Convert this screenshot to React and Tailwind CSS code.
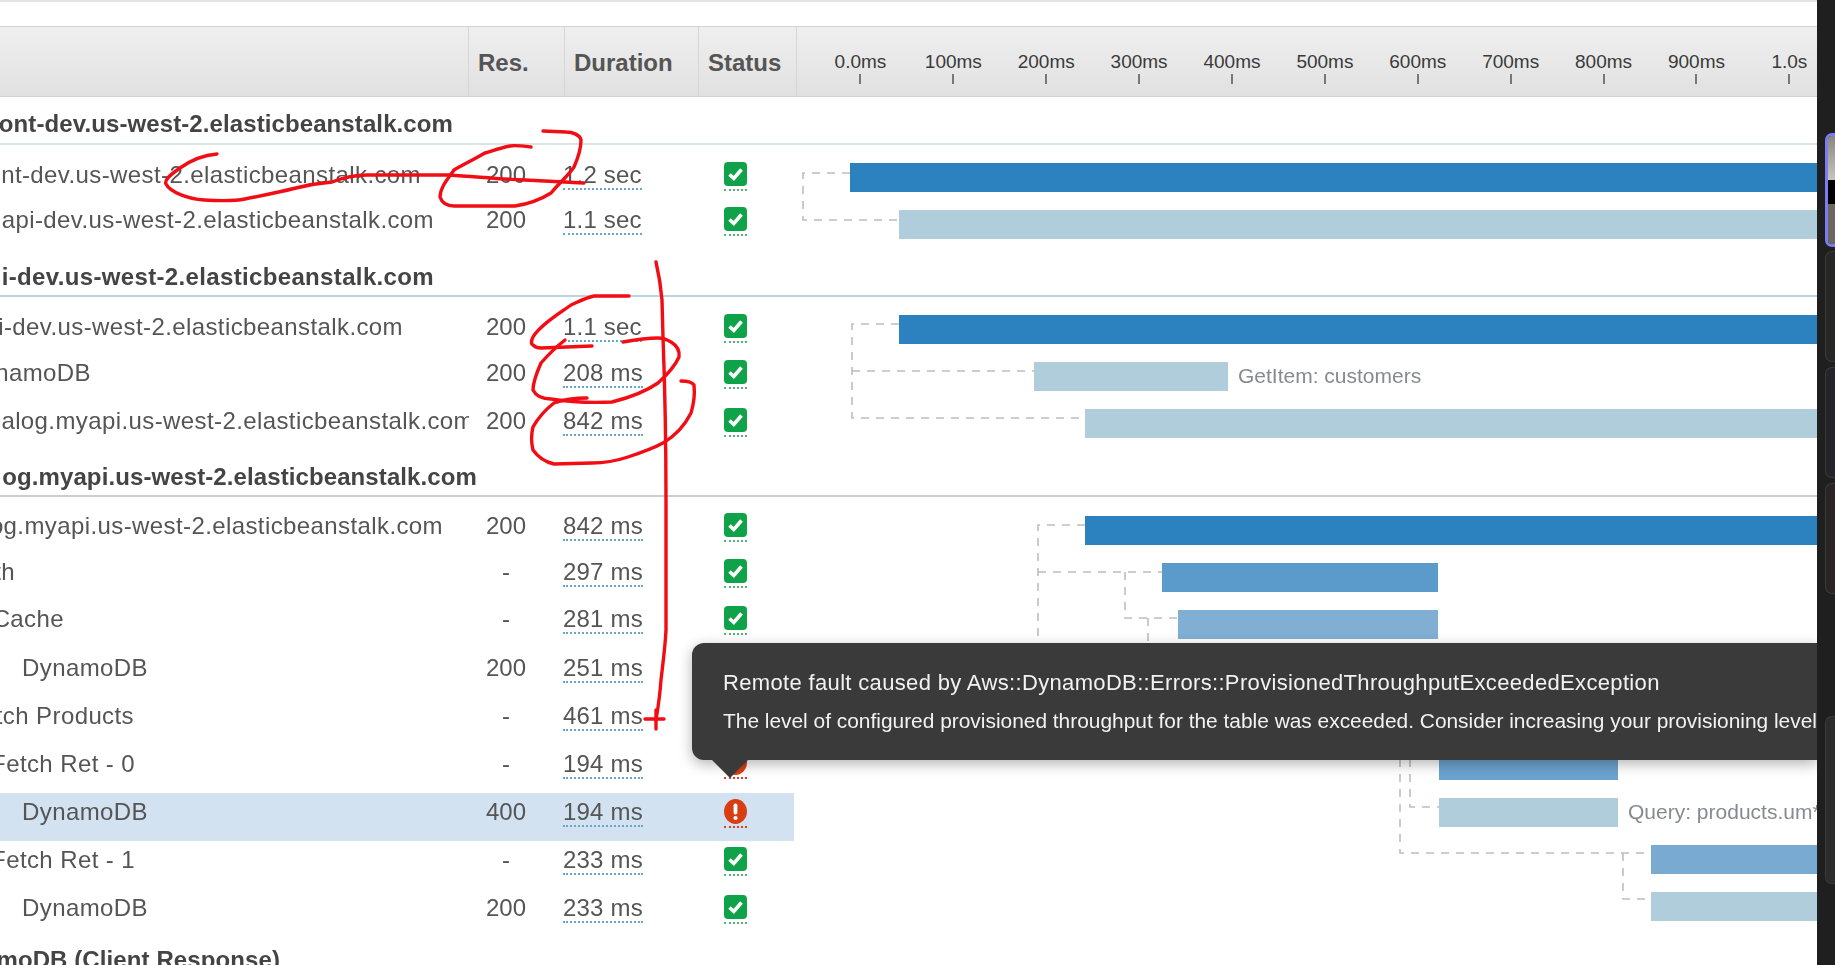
const ticks = ["0.0ms","100ms","200ms","300ms","400ms","500ms","600ms","700ms","800ms","900ms","1.0s"];

const DARK = "bg-[#2b82bf]";
const LIGHT = "bg-[#b0cddb]";

function StatusIcon({ kind }) {
  if (kind === "none") return null;
  if (kind === "error") {
    return (
      <span className="mt-[2px] flex w-[23px] flex-col items-center border-b-2 border-dotted border-[#d9421c] pb-[2px]">
        <svg width="23" height="25" viewBox="0 0 23 25">
          <ellipse cx="11.5" cy="12.5" rx="11.5" ry="12.5" fill="#d93d12" />
          <rect x="9.6" y="4.5" width="3.8" height="11" rx="1.7" fill="#fff" />
          <circle cx="11.5" cy="19" r="2.1" fill="#fff" />
        </svg>
      </span>
    );
  }
  return (
    <span className="mt-[2px] flex w-[23px] flex-col items-center border-b-2 border-dotted border-[#58b07c] pb-[3px]">
      <svg width="23" height="24" viewBox="0 0 23 24">
        <rect width="23" height="24" rx="4" fill="#10a249" />
        <path d="M5.5 12.5 L9.8 16.5 L17.5 7.5" fill="none" stroke="#fff" strokeWidth="3.6" />
      </svg>
    </span>
  );
}

function Row({ height, nameBox, name, res, dur, status = "ok", extra = "" }) {
  return (
    <div className={`flex w-[794px] items-center ${height} ${extra}`}>
      <div className="flex w-[469px] shrink-0 justify-start overflow-hidden">
        <div className={`flex shrink-0 justify-end whitespace-nowrap tracking-[0.4px] text-[#555] ${nameBox}`}>{name}</div>
      </div>
      <div className="w-[95px] shrink-0 pr-[21px] text-center text-[#555]">{res}</div>
      <div className="w-[135px] shrink-0">
        <span className="-ml-[1px] inline-block whitespace-nowrap border-b-2 border-dotted border-[#6aa6cc] leading-[27px] tracking-[0.2px] text-[#555]">{dur}</span>
      </div>
      <div className="flex w-[95px] shrink-0 pl-[25px]"><StatusIcon kind={status} /></div>
    </div>
  );
}

function Bar({ offset, width, color, label }) {
  return (
    <div className="flex h-[29px] items-center overflow-hidden">
      <div className={`h-[29px] shrink-0 ${offset} ${width} ${color}`} />
      {label && <span className="mb-[2px] ml-[10px] whitespace-nowrap text-[21px] text-[#858b90]">{label}</span>}
    </div>
  );
}

function Heading({ children, box, extra }) {
  return (
    <div className={`flex h-[48px] items-center overflow-hidden font-bold text-[#444] ${extra}`}>
      <div className={`flex shrink-0 justify-end whitespace-nowrap ${box}`}>{children}</div>
    </div>
  );
}

function Connectors() {
  const paths = [
    "M850 173 H803 V220 H899",
    "M899 324 H852 V418 H1085 M852 371 H1034",
    "M1085 525 H1038 V643 M1038 572 H1162 M1125 572 V618 H1178 M1148 618 V643",
    "M1400 759 V853 H1651 M1623 853 V899 H1651 M1410 759 V807 H1439",
  ];
  return (
    <svg className="absolute left-0 top-0" width="1817" height="965">
      {paths.map((d) => (
        <path key={d} d={d} fill="none" stroke="#bdbdbd" strokeWidth="1.6" strokeDasharray="8 7" />
      ))}
    </svg>
  );
}

function Scribbles() {
  const strokes = [
    "M217 154 C205 155 194 158 180 168 C170 175 164 180 166 184 C170 192 188 199 204 200 C222 201 235 201 245 199 C265 195 280 192 296 188 C312 184 320 183 332 182 C345 177 355 175 367 175 L449 175 C480 177 500 179 525 180 L584 183",
    "M531 147 C522 146 515 145 510 146 C500 148 495 150 485 153 C473 160 462 165 454 170 C447 180 440 188 440 197 C442 203 447 206 454 206 L515 206 C528 204 540 200 551 193 C560 182 568 176 574 167 C578 158 581 150 581 140 C580 135 573 132 566 132 L543 131",
    "M656 262 C659 275 661 288 662 300 L663 337 C665 390 666 450 666 500 L666 630 C665 650 662 670 661 680 C660 695 658 708 656 720",
    "M645 719 H664 M656 710 V729",
    "M629 296 L594 296 C585 298 578 302 571 305 C560 313 540 325 533 337 C531 341 531 344 533 345 C536 348 538 348 541 348 L592 346",
    "M565 340 C556 347 548 355 541 363 C537 372 533 381 533 390 C536 396 543 399 551 399 C570 402 592 403 612 402 C628 398 645 392 658 383 C668 374 675 366 679 357 C680 350 676 345 671 342 C666 339 662 338 658 338 C646 338 634 340 623 342",
    "M681 381 C687 381 692 382 694 385 C695 394 694 403 691 413 C685 425 675 436 663 443 C652 449 640 453 628 457 C616 461 604 463 592 463 L554 464 C545 462 538 457 533 450 C531 442 531 435 533 427 C538 418 545 410 554 403 C565 399 576 398 587 398",
  ];
  return (
    <svg className="pointer-events-none absolute left-0 top-0 z-20" width="1817" height="965">
      {strokes.map((d) => (
        <path key={d} d={d} fill="none" stroke="#f20d14" strokeWidth="3.4" strokeLinecap="round" />
      ))}
    </svg>
  );
}

function Tooltip() {
  return (
    <div className="absolute left-[692px] right-0 top-[643px] z-10 h-[117px] rounded-l-[12px] bg-[#3a3a3a] pl-[31px] pt-[27px] text-[#f2f2f2] shadow-[0_4px_14px_rgba(0,0,0,0.3)]">
      <div className="whitespace-nowrap text-[22px] leading-[26px] tracking-[0.34px]">Remote fault caused by Aws::DynamoDB::Errors::ProvisionedThroughputExceededException</div>
      <div className="mt-[12px] overflow-hidden whitespace-nowrap text-[20.9px] leading-[26px]">The level of configured provisioned throughput for the table was exceeded. Consider increasing your provisioning level</div>
      <div className="absolute left-[20px] top-[117px] h-0 w-0 border-x-[18px] border-t-[18px] border-x-transparent border-t-[#3a3a3a]" />
    </div>
  );
}

function Sidebar() {
  return (
    <div className="flex w-[18px] shrink-0 flex-col bg-[#1f1f1f] pl-[8px]">
      <div className="mt-[133px] flex h-[114px] flex-col overflow-hidden rounded-l-[7px] border-y-[3px] border-l-[3px] border-[#7b7bf2]">
        <div className="h-[44px] bg-gradient-to-b from-[#8a8782] to-[#c9c5bd]" />
        <div className="h-[24px] bg-black" />
        <div className="flex-1 bg-[#6c685f]" />
      </div>
      <div className="mt-[4px] h-[111px] rounded-l-[7px] border-y border-l border-[#3a3a3a] bg-[#272725]" />
      <div className="mt-[5px] h-[111px] rounded-l-[7px] border-y border-l border-[#3a3a3a] bg-[#24242a]" />
      <div className="mt-[5px] h-[111px] rounded-l-[7px] border-y border-l border-[#3a3a3a] bg-[#2b2424]" />
      <div className="mt-[122px] h-[168px] rounded-l-[7px] border-y border-l border-[#3f3a38] bg-[#2c2c2c]" />
    </div>
  );
}

export default function App() {
  return (
    <div className="flex h-[965px] w-[1835px] overflow-hidden bg-white font-['Liberation_Sans',Arial,sans-serif] text-[24px]">
      <div className="relative w-[1817px] shrink-0 overflow-hidden blur-[0.5px]">
        <Connectors />
        <div className="h-[2px] bg-[#e4e4e4]" />
        <div className="mt-[24px] flex h-[71px] items-center border-y border-[#d2d2d2] bg-gradient-to-b from-[#efefef] to-[#e1e1e1]">
          <div className="h-full w-[469px] shrink-0 border-r border-[#d6d6d6]" />
          <div className="flex h-full w-[96px] shrink-0 items-center border-r border-[#d6d6d6] pl-[9px] pt-[3px] font-bold text-[#555]">Res.</div>
          <div className="flex h-full w-[134px] shrink-0 items-center border-r border-[#d6d6d6] pl-[9px] pt-[3px] font-bold text-[#555]">Duration</div>
          <div className="flex h-full w-[98px] shrink-0 items-center border-r border-[#d6d6d6] pl-[9px] pt-[3px] font-bold text-[#555]">Status</div>
          <div className="mt-[11px] flex flex-1 pl-[17px]">
            {ticks.map((t) => (
              <div key={t} className="flex w-[92.9px] shrink-0 flex-col items-center">
                <span className="whitespace-nowrap text-[19px] leading-[24px] text-[#3a3a3a]">{t}</span>
                <span className="h-[10px] w-[2px] bg-[#777]" />
              </div>
            ))}
          </div>
        </div>

        <Heading box="w-[453px] tracking-[0.1px]" extra="border-b-2 border-[#d9e4e4] pt-[8px]">ont-dev.us-west-2.elasticbeanstalk.com</Heading>
        <div className="flex h-[104px]">
          <div className="w-[797px] shrink-0 pt-[8px]">
            <Row height="h-[44px]" nameBox="w-[421px]" name="nt-dev.us-west-2.elasticbeanstalk.com" res="200" dur="1.2 sec" />
            <Row height="h-[46px]" nameBox="w-[434px]" name="api-dev.us-west-2.elasticbeanstalk.com" res="200" dur="1.1 sec" />
          </div>
        </div>

        <Heading box="w-[434px] tracking-[0.35px]" extra="border-b-2 border-[#bcd5e2] pt-[9px]">i-dev.us-west-2.elasticbeanstalk.com</Heading>
        <div className="flex h-[152px]">
          <div className="w-[797px] shrink-0 pt-[7px]">
            <Row height="h-[46px]" nameBox="w-[403px]" name="i-dev.us-west-2.elasticbeanstalk.com" res="200" dur="1.1 sec" />
            <Row height="h-[46px]" nameBox="w-[91px]" name="namoDB" res="200" dur="208 ms" />
            <Row height="h-[50px]" nameBox="w-[474px]" name="alog.myapi.us-west-2.elasticbeanstalk.com" res="200" dur="842 ms" />
          </div>
        </div>

        <Heading box="w-[477px] tracking-[0.1px]" extra="border-b-2 border-[#cdcdcd] pt-[10px]">og.myapi.us-west-2.elasticbeanstalk.com</Heading>
        <div className="flex h-[439px]">
          <div className="w-[797px] shrink-0 pt-[6px]">
            <Row height="h-[46px]" nameBox="w-[443px]" name="og.myapi.us-west-2.elasticbeanstalk.com" res="200" dur="842 ms" />
            <Row height="h-[46px]" nameBox="w-[15px]" name="th" res="-" dur="297 ms" />
            <Row height="h-[48px]" nameBox="w-[64px]" name="Cache" res="-" dur="281 ms" />
            <Row height="h-[50px]" nameBox="w-[148px]" name="DynamoDB" res="200" dur="251 ms" status="none" />
            <Row height="h-[46px]" nameBox="w-[134px]" name="tch Products" res="-" dur="461 ms" status="none" />
            <Row height="h-[54px]" nameBox="w-[135px]" name="Fetch Ret - 0" res="-" dur="194 ms" status="error" extra="pb-[5px]" />
            <Row height="h-[48px]" nameBox="w-[148px]" name="DynamoDB" res="400" dur="194 ms" status="error" extra="bg-[#d2e2f0] pb-[10px]" />
            <Row height="h-[38px]" nameBox="w-[135px]" name="Fetch Ret - 1" res="-" dur="233 ms" />
            <Row height="h-[58px]" nameBox="w-[148px]" name="DynamoDB" res="200" dur="233 ms" />
          </div>
        </div>

        <Heading box="w-[280px] tracking-[0.1px]">moDB (Client Response)</Heading>

        <div className="absolute left-[797px] top-[163px] flex w-[1020px] flex-col gap-[18px]">
          <Bar offset="ml-[53px]" width="flex-1" color={DARK} />
          <Bar offset="ml-[102px]" width="flex-1" color={LIGHT} />
        </div>
        <div className="absolute left-[797px] top-[315px] flex w-[1020px] flex-col gap-[18px]">
          <Bar offset="ml-[102px]" width="flex-1" color={DARK} />
          <Bar offset="ml-[237px]" width="w-[194px]" color={LIGHT} label="GetItem: customers" />
          <Bar offset="ml-[288px]" width="flex-1" color={LIGHT} />
        </div>
        <div className="absolute left-[797px] top-[516px] flex w-[1020px] flex-col gap-[18px]">
          <Bar offset="ml-[288px]" width="flex-1" color={DARK} />
          <Bar offset="ml-[365px]" width="w-[276px]" color="bg-[#5a9bcb]" />
          <Bar offset="ml-[381px]" width="w-[260px]" color="bg-[#80afd3]" />
          <Bar offset="ml-[381px]" width="w-[260px]" color="bg-[#80afd3]" />
          <Bar offset="ml-[642px]" width="w-[179px]" color="bg-[#80afd3]" />
          <Bar offset="ml-[642px]" width="w-[179px]" color="bg-[#6ba3cf]" />
          <Bar offset="ml-[642px]" width="w-[179px]" color={LIGHT} label="Query: products.um*" />
          <Bar offset="ml-[854px]" width="flex-1" color="bg-[#78aad2]" />
          <Bar offset="ml-[854px]" width="flex-1" color={LIGHT} />
        </div>

        <Tooltip />
        <Scribbles />
      </div>
      <Sidebar />
    </div>
  );
}
